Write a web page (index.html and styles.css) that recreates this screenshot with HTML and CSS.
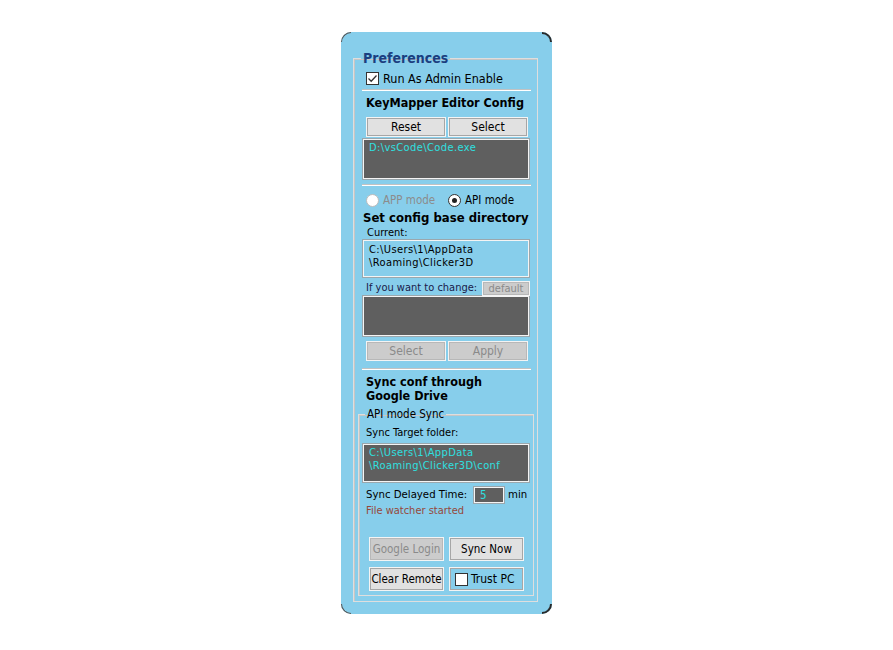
FILE: index.html
```html
<!DOCTYPE html>
<html lang="en">
<head>
<meta charset="utf-8">
<title>Preferences</title>
<link rel="stylesheet" href="styles.css">
</head>
<body>
<div class="page">
  <div class="panel">
    <span class="corner tl"></span><span class="corner tr"></span><span class="corner bl"></span><span class="corner br"></span>
    <fieldset class="group outer">
      <legend class="group-title">Preferences</legend>
      <label class="check-row">
        <span class="checkbox"><svg width="11" height="11" viewBox="0 0 11 11"><polyline points="1.5,5.5 4.2,8.2 9.5,2.5" fill="none" stroke="#333" stroke-width="1.3"/></svg></span>
        <span class="check-label">Run As Admin Enable</span>
      </label>
      <div class="sep"></div>
      <div class="heading h1">KeyMapper Editor Config</div>
      <div class="btn-row top-btns">
        <button class="btn">Reset</button>
        <button class="btn">Select</button>
      </div>
      <div class="textbox dark cyan tb-editor">D:\vsCode\Code.exe</div>
      <div class="sep sep2"></div>
      <div class="radio-row">
        <span class="radio-item disabled"><span class="radio"></span>APP mode</span>
        <span class="radio-item"><span class="radio on"></span>API mode</span>
      </div>
      <div class="heading h2">Set config base directory</div>
      <div class="label current-label">Current:</div>
      <div class="textbox light tb-current">C:\Users\1\AppData<br>\Roaming\Clicker3D</div>
      <div class="change-row">
        <span class="label navy">If you want to change:</span>
        <button class="btn disabled small" disabled>default</button>
      </div>
      <div class="textbox dark tb-new"></div>
      <div class="btn-row mid-btns">
        <button class="btn disabled" disabled>Select</button>
        <button class="btn disabled" disabled>Apply</button>
      </div>
      <div class="sep sep3"></div>
      <div class="heading h3"><div>Sync conf through</div><div>Google Drive</div></div>
      <fieldset class="group inner">
        <legend class="inner-title">API mode Sync</legend>
        <div class="label target-label">Sync Target folder:</div>
        <div class="textbox dark cyan tb-target">C:\Users\1\AppData<br>\Roaming\Clicker3D\conf</div>
        <div class="delay-row">
          <span class="label">Sync Delayed Time:</span>
          <span class="num-input">5</span>
          <span class="label">min</span>
        </div>
        <div class="label status">File watcher started</div>
        <div class="btn-grid">
          <button class="btn disabled" disabled>Google Login</button>
          <button class="btn">Sync Now</button>
          <button class="btn">Clear Remote</button>
          <label class="btn toggle"><span class="checkbox"></span>Trust PC</label>
        </div>
      </fieldset>
    </fieldset>
  </div>
</div>
</body>
</html>
```
FILE: styles.css
```css
* { box-sizing: border-box; }

body {
  margin: 0;
  background: #ffffff;
  font-family: "DejaVu Sans Condensed", "DejaVu Sans", sans-serif;
  font-stretch: condensed;
  color: #000;
}

.page { padding-top: 32px; }

.panel {
  position: relative;
  width: 211px;
  height: 582px;
  margin: 0 auto;
  background: #87ceeb;
  border-radius: 10px;
  padding: 18px 14px 0 12px;
}

.corner {
  position: absolute;
  width: 10px;
  height: 10px;
  border: 0 solid #2a2a2a;
}
.corner.tl { top: 0; left: 0; border-top-width: 1px; border-left-width: 1px; border-top-left-radius: 10px; border-color: #555; }
.corner.tr { top: 0; right: 0; border-top-width: 2px; border-right-width: 2px; border-top-right-radius: 10px; }
.corner.bl { bottom: 0; left: 0; border-bottom-width: 1px; border-left-width: 1px; border-bottom-left-radius: 10px; border-color: #555; }
.corner.br { bottom: 0; right: 0; border-bottom-width: 2px; border-right-width: 2px; border-bottom-right-radius: 10px; }

.group {
  margin: 0;
  min-width: 0;
  border: 1px solid #dedede;
  box-shadow: inset 1px 1px 0 #c6c6c6;
}

.outer {
  width: 185px;
  padding: 2px 6px 5px 8px;
}

.group-title {
  margin-left: -1px;
  padding: 0 2px;
  font-size: 14px;
  line-height: 16px;
  font-weight: bold;
  color: #1b3f80;
}

.check-row {
  display: flex;
  align-items: center;
  gap: 4px;
  height: 21px;
  padding-left: 4px;
}

.checkbox {
  display: inline-flex;
  align-items: center;
  justify-content: center;
  width: 13px;
  height: 13px;
  background: #fff;
  border: 1px solid #333;
  flex: none;
}

.check-label { font-size: 12.5px; }

.sep {
  height: 2px;
  border-top: 1px solid #c2c2c2;
  border-bottom: 1px solid #ffffff;
}

.heading {
  font-weight: bold;
  font-size: 12.5px;
  line-height: 16px;
}
.h1 { margin-top: 4px; padding-left: 4px; height: 16px; }
.h2 { margin-top: 2px; padding-left: 1px; height: 16px; font-size: 13px; }
.h3 { margin-top: 5px; padding-left: 4px; line-height: 14px; height: 27px; }

.btn-row {
  display: flex;
  gap: 2px;
  padding: 0 3px 0 4px;
}
.btn-row .btn { flex: 1; }
.top-btns { margin-top: 6px; }
.mid-btns { margin-top: 5px; }

.btn {
  height: 20px;
  padding: 0;
  background: #e1e1e1;
  border: 1px solid #f4f4f4;
  box-shadow: inset 0 0 0 1px #a6a6a6;
  font-family: inherit;
  font-stretch: condensed;
  font-size: 12px;
  color: #000;
  display: flex;
  align-items: center;
  justify-content: center;
}
.btn.disabled {
  background: #cccccc;
  color: #8a8a8a;
  box-shadow: inset 0 0 0 1px #b8b8b8;
}

.textbox {
  margin: 0 2px 0 1px;
  border: 1px solid #f4f4f4;
  box-shadow: 0 0 0 1px #9aa7ad;
  padding: 1px 5px;
  font-size: 11px;
  letter-spacing: 0.4px;
  line-height: 13px;
}
.textbox.dark { background: #5f5f5f; }
.textbox.light { background: #87ceeb; }
.cyan { color: #2ee0e0; }

.tb-editor { margin-top: 2px; height: 40px; }
.tb-current { height: 37px; padding-top: 2px; }
.tb-new { height: 40px; }
.tb-target { margin-top: 4px; height: 38px; padding-top: 1px; }

.sep2 { margin-top: 5px; }
.sep3 { margin-top: 7px; }

.radio-row {
  display: flex;
  align-items: center;
  height: 16px;
  margin-top: 6px;
  padding-left: 4px;
  font-size: 11.5px;
}
.radio-item {
  display: flex;
  align-items: center;
  gap: 4px;
  width: 82px;
}
.radio-item.disabled { color: #8c8c8c; }
.radio {
  width: 13px;
  height: 13px;
  border-radius: 50%;
  background: #fff;
  border: 1px solid #333;
  position: relative;
  flex: none;
}
.radio-item.disabled .radio { border-color: #bcbcbc; }
.radio.on::after {
  content: "";
  position: absolute;
  left: 3px;
  top: 3px;
  width: 5px;
  height: 5px;
  border-radius: 50%;
  background: #222;
}

.label {
  font-size: 11px;
  line-height: 14px;
}
.current-label { padding-left: 5px; height: 14px; }
.navy { color: #1a1a4a; }

.change-row {
  display: flex;
  align-items: flex-end;
  justify-content: space-between;
  height: 16px;
  margin-top: 3px;
  padding-left: 4px;
  padding-right: 1px;
}
.change-row .label { align-self: center; }
.btn.small {
  width: 48px;
  height: 15px;
  font-size: 11px;
}

.inner {
  margin: 5px -3px 0 -4px;
  padding: 0 2px 4px 3px;
}
.inner-title {
  margin-left: 3px;
  padding: 0 2px;
  font-size: 11.5px;
  line-height: 14px;
}

.target-label { margin-top: 5px; padding-left: 4px; }

.delay-row {
  display: flex;
  align-items: center;
  height: 17px;
  margin-top: 4px;
  padding-left: 4px;
}
.delay-row .label { font-size: 11.3px; }
.num-input {
  width: 30px;
  height: 16px;
  margin: 0 4px 0 7px;
  background: #5f5f5f;
  border: 1px solid #f4f4f4;
  box-shadow: 0 0 0 1px #9aa7ad;
  color: #2ee0e0;
  font-size: 11.5px;
  line-height: 14px;
  padding-left: 5px;
}

.status { color: #96483a; padding-left: 4px; margin-top: 1px; }

.btn-grid {
  display: grid;
  grid-template-columns: 75px 75px;
  gap: 6px 5px;
  margin-top: 19px;
  padding-left: 7px;
}
.btn-grid .btn { height: 24px; font-size: 11.5px; }
.btn.toggle {
  background: #87ceeb;
  justify-content: flex-start;
  gap: 3px;
  padding-left: 5px;
  font-size: 12px;
}
.toggle .checkbox { width: 13px; height: 13px; }
```
